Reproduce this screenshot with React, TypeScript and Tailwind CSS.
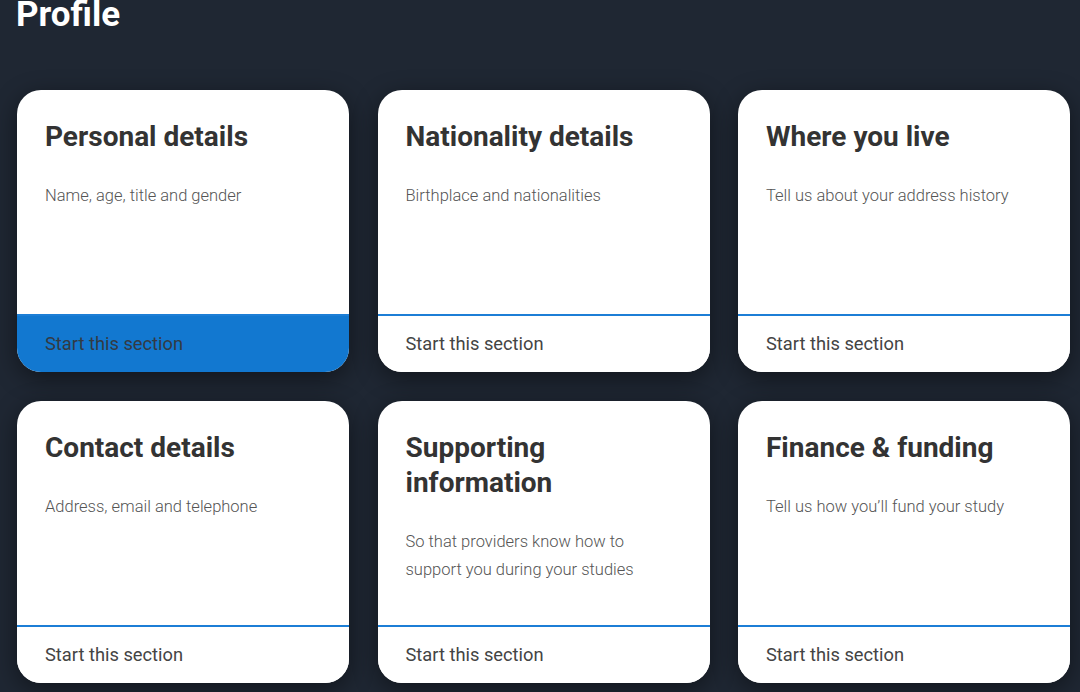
const sections = [
  { title: 'Personal details', text: 'Name, age, title and gender', active: true },
  { title: 'Nationality details', text: 'Birthplace and nationalities' },
  { title: 'Where you live', text: 'Tell us about your address history' },
  { title: 'Contact details', text: 'Address, email and telephone' },
  { title: 'Supporting information', text: 'So that providers know how to support you during your studies' },
  { title: 'Finance & funding', text: 'Tell us how you\u2019ll fund your study' },
];

function SectionCard({ title, text, active }: { title: string; text: string; active?: boolean }) {
  return (
    <div className="flex h-[282px] flex-col overflow-hidden rounded-[24px] bg-white shadow-[0_6px_24px_rgba(0,0,0,0.45)]">
      <div className="flex-1 pl-[28px] pr-[44px] pt-[29px]">
        <h2 className="text-[28px] font-bold leading-[35px] text-[#333333]">{title}</h2>
        <p className="mt-[28px] text-[16.5px] font-light leading-[28px] text-[#555555]">{text}</p>
      </div>
      <div
        className={`h-[58px] border-t-2 border-[#1c7ed6] px-[28px] pt-[16px] text-[18.3px] leading-[24px] ${
          active ? 'bg-[#1278d0] text-[#333a44]' : 'bg-white text-[#444444]'
        }`}
      >
        Start this section
      </div>
    </div>
  );
}

export default function App() {
  return (
    <div className="h-[692px] w-[1080px] overflow-hidden bg-[#1f2733] font-['Roboto',sans-serif]">
      <h1 className="pl-[16px] text-[35px] font-bold leading-[30px] text-white">Profile</h1>
      <div className="mt-[60px] grid grid-cols-[repeat(3,332px)] gap-x-[28.5px] gap-y-[29px] pl-[17px]">
        {sections.map((s) => (
          <SectionCard key={s.title} title={s.title} text={s.text} active={s.active} />
        ))}
      </div>
    </div>
  );
}
